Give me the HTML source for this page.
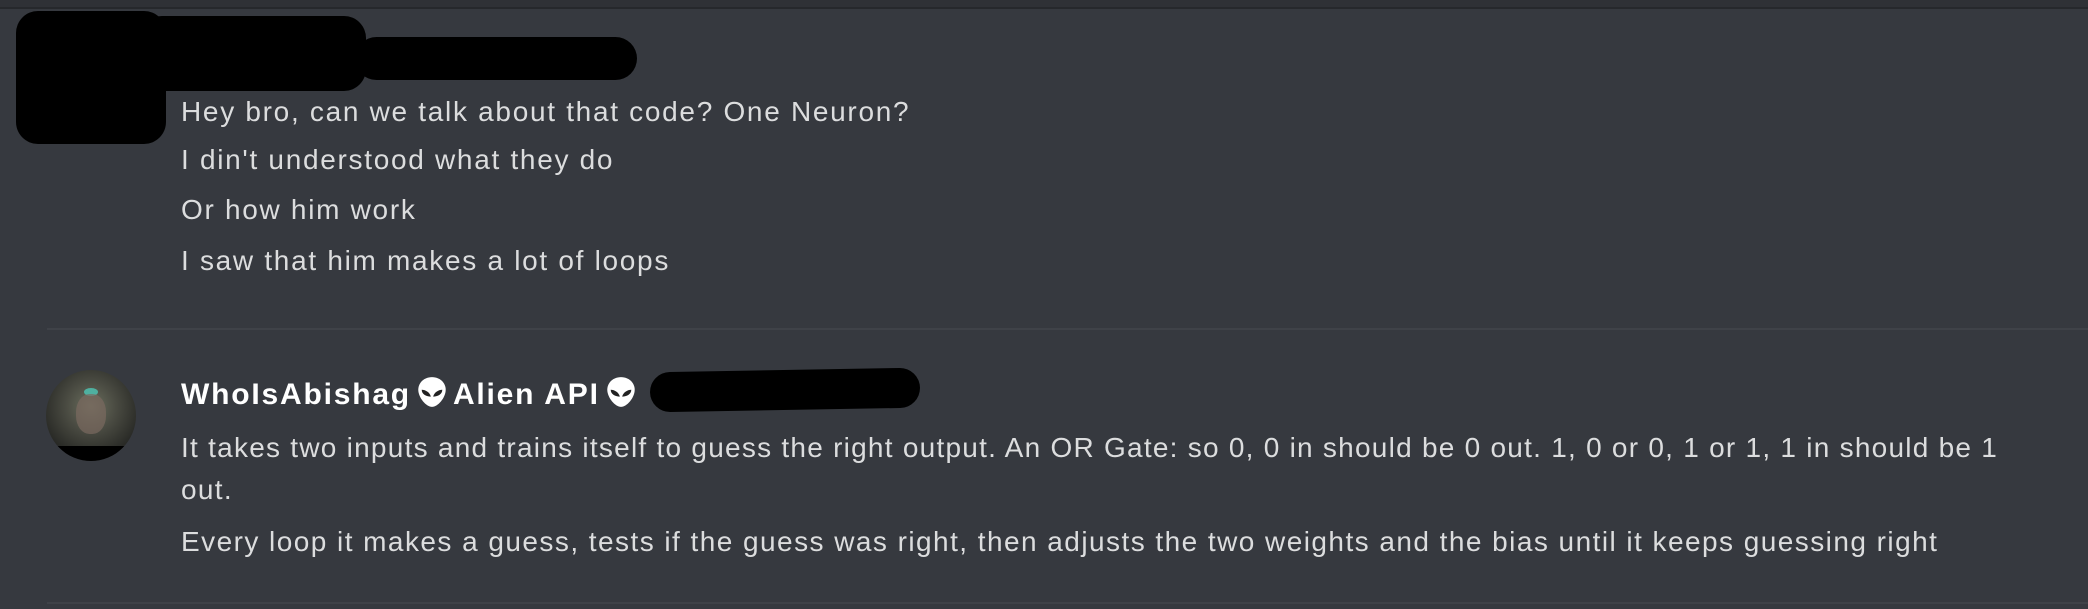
<!DOCTYPE html>
<html><head><meta charset="utf-8"><style>
html,body{margin:0;padding:0;}
body{width:2088px;height:609px;background:#36393f;position:relative;overflow:hidden;font-family:"Liberation Sans",sans-serif;color:#dcddde;}
.t{position:absolute;left:181px;font-size:28px;letter-spacing:1.3px;white-space:nowrap;line-height:32px;}
.blk{position:absolute;background:#000;}
.al{display:inline-block;vertical-align:-4px;margin:0 6px;}
</style></head><body>
<div style="position:absolute;left:0;top:0;width:2088px;height:7px;background:#2f3136"></div>
<div style="position:absolute;left:0;top:7px;width:2088px;height:2px;background:#26282c"></div>

<div class="blk" style="left:16px;top:11px;width:150px;height:133px;border-radius:22px"></div>
<div class="blk" style="left:140px;top:16px;width:226px;height:75px;border-radius:22px"></div>
<div class="blk" style="left:355px;top:37px;width:282px;height:43px;border-radius:22px"></div>

<div class="t" style="top:96px;letter-spacing:1.7px">Hey bro, can we talk about that code? One Neuron?</div>
<div class="t" style="top:144px;letter-spacing:1.7px">I din't understood what they do</div>
<div class="t" style="top:194px;letter-spacing:1.7px">Or how him work</div>
<div class="t" style="top:245px;letter-spacing:1.7px">I saw that him makes a lot of loops</div>

<div style="position:absolute;left:47px;top:328px;width:2041px;height:2px;background:#3f4248"></div>

<div style="position:absolute;left:46px;top:370px;width:90px;height:91px;border-radius:50%;overflow:hidden;background:radial-gradient(circle at 50% 40%,#6b6f5e 0%,#4a4b42 35%,#2a2b27 70%,#111 100%)">
<div style="position:absolute;left:0;top:76px;width:90px;height:15px;background:#000"></div>
<div style="position:absolute;left:38px;top:18px;width:14px;height:8px;background:#4fb0a0;border-radius:50%"></div>
<div style="position:absolute;left:30px;top:24px;width:30px;height:40px;background:#7a6a60;border-radius:45%;opacity:.7"></div>
</div>

<div class="t" style="top:376px;font-size:30px;font-weight:bold;color:#fff;letter-spacing:1.8px">WhoIsAbishag<svg class="al" width="30" height="32" viewBox="0 0 26 28"><path d="M13 1C6 1 1 6 1 12c0 7 7 15 12 15s12-8 12-15C25 6 20 1 13 1z" fill="#fff"/><path d="M4 12c3 0 7 2 8 6-4 0-8-2-8-6z" fill="#222"/><path d="M22 12c-3 0-7 2-8 6 4 0 8-2 8-6z" fill="#222"/></svg>Alien API<svg class="al" width="30" height="32" viewBox="0 0 26 28"><path d="M13 1C6 1 1 6 1 12c0 7 7 15 12 15s12-8 12-15C25 6 20 1 13 1z" fill="#fff"/><path d="M4 12c3 0 7 2 8 6-4 0-8-2-8-6z" fill="#222"/><path d="M22 12c-3 0-7 2-8 6 4 0 8-2 8-6z" fill="#222"/></svg></div>
<div class="blk" style="left:650px;top:370px;width:270px;height:40px;border-radius:20px;transform:rotate(-1deg)"></div>

<div class="t" style="top:432px;letter-spacing:1.25px">It takes two inputs and trains itself to guess the right output. An OR Gate: so 0, 0 in should be 0 out. 1, 0 or 0, 1 or 1, 1 in should be 1</div>
<div class="t" style="top:474px">out.</div>
<div class="t" style="top:526px;letter-spacing:1.45px">Every loop it makes a guess, tests if the guess was right, then adjusts the two weights and the bias until it keeps guessing right</div>

<div style="position:absolute;left:47px;top:602px;width:2041px;height:2px;background:#3f4248"></div>
</body></html>
